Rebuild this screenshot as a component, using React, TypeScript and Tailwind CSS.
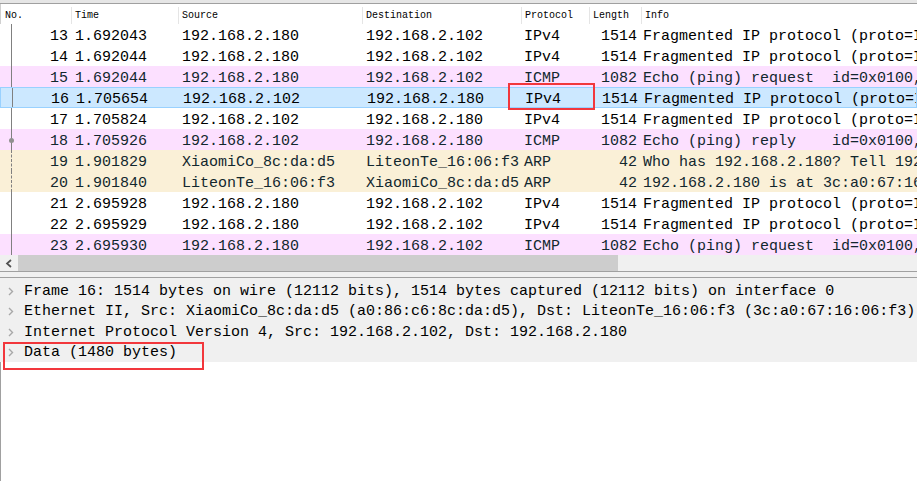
import React from "react";

type Row = {
  no: number;
  time: string;
  src: string;
  dst: string;
  proto: string;
  len: number;
  info: string;
  kind: "plain" | "icmp" | "arp";
  selected?: boolean;
};

const rows: Row[] = [
  { no: 13, time: "1.692043", src: "192.168.2.180", dst: "192.168.2.102", proto: "IPv4", len: 1514, info: "Fragmented IP protocol (proto=ICMP 1, off=0, ID=7f1c) [Reassembled in #15]", kind: "plain" },
  { no: 14, time: "1.692044", src: "192.168.2.180", dst: "192.168.2.102", proto: "IPv4", len: 1514, info: "Fragmented IP protocol (proto=ICMP 1, off=1480, ID=7f1c) [Reassembled in #15]", kind: "plain" },
  { no: 15, time: "1.692044", src: "192.168.2.180", dst: "192.168.2.102", proto: "ICMP", len: 1082, info: "Echo (ping) request  id=0x0100, seq=1/256, ttl=64 (reply in 18)", kind: "icmp" },
  { no: 16, time: "1.705654", src: "192.168.2.102", dst: "192.168.2.180", proto: "IPv4", len: 1514, info: "Fragmented IP protocol (proto=ICMP 1, off=0, ID=a3b2) [Reassembled in #18]", kind: "plain", selected: true },
  { no: 17, time: "1.705824", src: "192.168.2.102", dst: "192.168.2.180", proto: "IPv4", len: 1514, info: "Fragmented IP protocol (proto=ICMP 1, off=1480, ID=a3b2) [Reassembled in #18]", kind: "plain" },
  { no: 18, time: "1.705926", src: "192.168.2.102", dst: "192.168.2.180", proto: "ICMP", len: 1082, info: "Echo (ping) reply    id=0x0100, seq=1/256, ttl=64 (request in 15)", kind: "icmp" },
  { no: 19, time: "1.901829", src: "XiaomiCo_8c:da:d5", dst: "LiteonTe_16:06:f3", proto: "ARP", len: 42, info: "Who has 192.168.2.180? Tell 192.168.2.102", kind: "arp" },
  { no: 20, time: "1.901840", src: "LiteonTe_16:06:f3", dst: "XiaomiCo_8c:da:d5", proto: "ARP", len: 42, info: "192.168.2.180 is at 3c:a0:67:16:06:f3", kind: "arp" },
  { no: 21, time: "2.695928", src: "192.168.2.180", dst: "192.168.2.102", proto: "IPv4", len: 1514, info: "Fragmented IP protocol (proto=ICMP 1, off=0, ID=7f1d) [Reassembled in #23]", kind: "plain" },
  { no: 22, time: "2.695929", src: "192.168.2.180", dst: "192.168.2.102", proto: "IPv4", len: 1514, info: "Fragmented IP protocol (proto=ICMP 1, off=1480, ID=7f1d) [Reassembled in #23]", kind: "plain" },
  { no: 23, time: "2.695930", src: "192.168.2.180", dst: "192.168.2.102", proto: "ICMP", len: 1082, info: "Echo (ping) request  id=0x0100, seq=2/512, ttl=64 (reply in 26)", kind: "icmp" },
];

const details = [
  "Frame 16: 1514 bytes on wire (12112 bits), 1514 bytes captured (12112 bits) on interface 0",
  "Ethernet II, Src: XiaomiCo_8c:da:d5 (a0:86:c6:8c:da:d5), Dst: LiteonTe_16:06:f3 (3c:a0:67:16:06:f3)",
  "Internet Protocol Version 4, Src: 192.168.2.102, Dst: 192.168.2.180",
  "Data (1480 bytes)",
];

const cols = "grid grid-cols-[71px_107px_184px_159px_68px_52px_1fr]";

function rowClass(r: Row) {
  if (r.selected) return "bg-[#cce8ff] border border-[#99d1ff] text-black";
  if (r.kind === "icmp") return "bg-[#fce0ff] text-[#12272e]";
  if (r.kind === "arp") return "bg-[#faf0d7] text-[#12272e]";
  return "bg-white text-black";
}

// related-packet gutter mark
function Gutter({ no }: { no: number }) {
  if (no === 19 || no === 20) {
    return <div className="absolute left-[11px] top-0 bottom-0 border-l border-dashed border-[#808080]" />;
  }
  return (
    <>
      <div className="absolute left-[11px] top-0 bottom-0 w-px bg-[#808080]" />
      {no === 18 && <div className="absolute left-[9px] top-[9px] w-[5px] h-[5px] rounded-full bg-[#909090]" />}
    </>
  );
}

export default function App() {
  return (
    <div className="relative w-[917px] h-[481px] overflow-hidden bg-white font-['Liberation_Mono',monospace]">
      {/* top toolbar edge */}
      <div className="h-[3px] bg-[#e6e6e6]" />
      <div className="h-px bg-[#a0a0a0]" />

      {/* column header */}
      <div className={`${cols} h-[20px] pt-[3px] bg-white text-[10px] text-black border-l border-[#d0d0d0]`}>
        {["No.", "Time", "Source", "Destination", "Protocol", "Length", "Info"].map((h, i) => (
          <div key={h} className={`flex items-center ${i === 0 ? "pl-[4px]" : "pl-[3px]"} ${i < 6 ? "border-r border-[#e5e5e5]" : ""} whitespace-nowrap overflow-hidden`}>
            {h}
          </div>
        ))}
      </div>

      {/* packet list */}
      <div className="flex flex-col text-[15px] leading-none">
        {rows.map((r) => (
          <div key={r.no} className={`relative ${cols} h-[21px] pt-[3px] items-center whitespace-pre ${rowClass(r)}`}>
            <Gutter no={r.no} />
            <div className="text-right pr-[3px]">{r.no}</div>
            <div className="pl-[4px]">{r.time}</div>
            <div className="pl-[4px]">{r.src}</div>
            <div className="pl-[4px]">{r.dst}</div>
            <div className="pl-[3px]">{r.proto}</div>
            <div className="text-right pr-[4px]">{r.len}</div>
            <div className="pl-[2px] overflow-hidden">{r.info}</div>
          </div>
        ))}
      </div>

      {/* horizontal scrollbar */}
      <div className="flex h-[16px] bg-[#f0f0f0]">
        <div className="w-[18px] flex items-center justify-center">
          <svg width="8" height="9" viewBox="0 0 8 9">
            <path d="M6 1 L2 4.5 L6 8" fill="none" stroke="#505050" strokeWidth="1.7" />
          </svg>
        </div>
        <div className="w-[600px] bg-[#cdcdcd]" />
      </div>

      {/* splitter */}
      <div className="h-px bg-[#a0a0a0]" />
      <div className="h-[5px] bg-[#f0f0f0]" />
      <div className="h-px bg-[#a0a0a0]" />

      {/* packet details */}
      <div className="flex flex-col bg-[#f0f0f0] text-[15px] leading-none text-black pt-[2px] h-[84px]">
        {details.map((d, i) => (
          <div key={i} className="flex items-center h-[20.7px] pt-[2px] whitespace-pre">
            <div className="w-[24px] flex items-center justify-center pr-[5px] pl-[3px]">
              <svg width="6" height="9" viewBox="0 0 6 9">
                <path d="M1 1 L4.5 4.5 L1 8" fill="none" stroke="#a8a8a8" strokeWidth="1.4" />
              </svg>
            </div>
            <div>{d}</div>
          </div>
        ))}
      </div>

      <div className="h-[130px] border-l border-[#a0a0a0] bg-white" />

      {/* annotation boxes */}
      <div className="absolute left-[508px] top-[83px] w-[87px] h-[27px] border-2 border-[#f2373c]" />
      <div className="absolute left-[3px] top-[342px] w-[201px] h-[28px] border-2 border-[#f2373c]" />
    </div>
  );
}
